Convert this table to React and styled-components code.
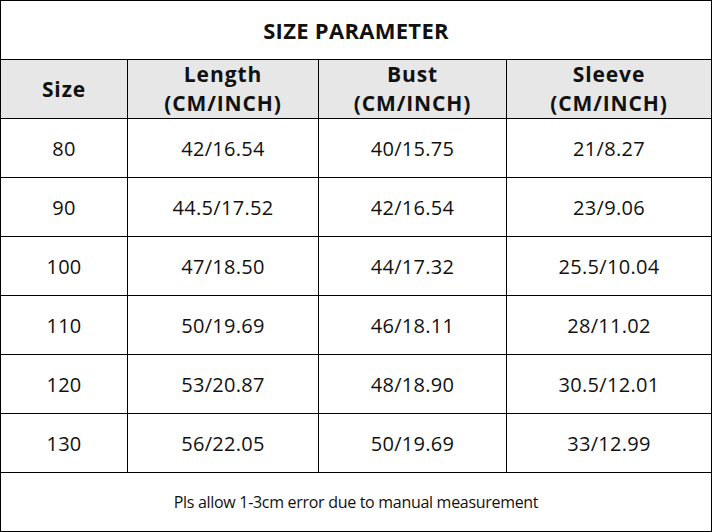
import React from 'react';
import styled, { createGlobalStyle } from 'styled-components';

const GlobalStyle = createGlobalStyle`
  body {
    margin: 0;
    background: #fff;
    font-family: 'Open Sans', 'Noto Sans', Arial, sans-serif;
    color: #111;
  }
`;

const Table = styled.table`
  width: 712px;
  border-collapse: collapse;
  table-layout: fixed;
  margin: 0;

  td, th {
    border: 1.5px solid #000;
    text-align: center;
    vertical-align: middle;
    padding: 0;
  }
`;

const TitleCell = styled.th`
  height: 58px;
  font-size: 22px;
  font-weight: 700;
  letter-spacing: 0.3px;
`;

const HeadCell = styled.th`
  height: 58px;
  background: #e7e7e7;
  font-size: 21px;
  font-weight: 700;
  line-height: 29px;
  letter-spacing: 0.9px;
`;

const Cell = styled.td`
  height: 58px;
  font-size: 20px;
  font-weight: 400;
  letter-spacing: 0.3px;
`;

const Note = styled.td`
  height: 58px;
  font-size: 16px;
  letter-spacing: -0.3px;
`;

const rows = [
  ['80', '42/16.54', '40/15.75', '21/8.27'],
  ['90', '44.5/17.52', '42/16.54', '23/9.06'],
  ['100', '47/18.50', '44/17.32', '25.5/10.04'],
  ['110', '50/19.69', '46/18.11', '28/11.02'],
  ['120', '53/20.87', '48/18.90', '30.5/12.01'],
  ['130', '56/22.05', '50/19.69', '33/12.99'],
];

export default function App() {
  return (
    <>
      <GlobalStyle />
      <Table>
        <colgroup>
          <col style={{ width: 127 }} />
          <col style={{ width: 191 }} />
          <col style={{ width: 188 }} />
          <col />
        </colgroup>
        <thead>
          <tr>
            <TitleCell colSpan={4}>SIZE PARAMETER</TitleCell>
          </tr>
          <tr>
            <HeadCell>Size</HeadCell>
            <HeadCell>Length<br />(CM/INCH)</HeadCell>
            <HeadCell>Bust<br />(CM/INCH)</HeadCell>
            <HeadCell>Sleeve<br />(CM/INCH)</HeadCell>
          </tr>
        </thead>
        <tbody>
          {rows.map(r => (
            <tr key={r[0]}>
              {r.map((v, i) => <Cell key={i}>{v}</Cell>)}
            </tr>
          ))}
          <tr>
            <Note colSpan={4}>Pls allow 1-3cm error due to manual measurement</Note>
          </tr>
        </tbody>
      </Table>
    </>
  );
}
